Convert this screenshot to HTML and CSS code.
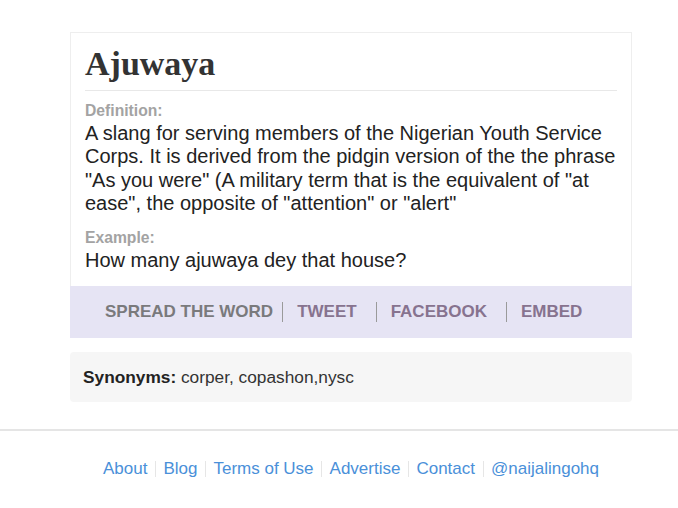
FILE: index.html
```html
<!DOCTYPE html>
<html lang="en">
<head>
<meta charset="utf-8">
<title>Ajuwaya</title>
<link rel="stylesheet" href="styles.css">
</head>
<body>
<div class="container">
  <div class="card">
    <div class="card-body">
      <h1 class="title">Ajuwaya</h1>
      <div class="label label-def">Definition:</div>
      <p class="text">A slang for serving members of the Nigerian Youth Service Corps. It is derived from the pidgin version of the the phrase "As you were" (A military term that is the equivalent of "at ease", the opposite of "attention" or "alert"</p>
      <div class="label label-ex">Example:</div>
      <p class="text">How many ajuwaya dey that house?</p>
    </div>
    <div class="share">
      <span class="share-label">SPREAD THE WORD</span>
      <a class="share-link" href="#">TWEET</a>
      <a class="share-link" href="#">FACEBOOK</a>
      <a class="share-link" href="#">EMBED</a>
    </div>
  </div>
  <div class="synonyms"><b>Synonyms:</b> corper, copashon,nysc</div>
</div>
<footer class="footer">
  <nav class="footer-links">
    <a href="#">About</a><span class="sep"></span><a href="#">Blog</a><span class="sep"></span><a href="#">Terms of Use</a><span class="sep"></span><a href="#">Advertise</a><span class="sep"></span><a href="#">Contact</a><span class="sep"></span><a href="#">@naijalingohq</a>
  </nav>
</footer>
</body>
</html>
```
FILE: styles.css
```css
html, body {
  margin: 0;
  padding: 0;
  background: #fff;
}
body {
  font-family: "Liberation Sans", Arial, sans-serif;
  color: #222;
}
.container {
  width: 562px;
  margin: 0 0 0 70px;
  padding-top: 32px;
}
.card {
  border: 1px solid #eeeeee;
  border-bottom: none;
  background: #fff;
}
.card-body {
  padding: 11px 14px 13.5px 14px;
}
.title {
  margin: 0;
  font-family: "Liberation Serif", "Times New Roman", serif;
  font-weight: bold;
  font-size: 34px;
  line-height: 40px;
  color: #333;
  padding-bottom: 6px;
  border-bottom: 1px solid #e8e8e8;
}
.label {
  font-size: 15.7px;
  font-weight: bold;
  line-height: 18px;
  color: #a3a3a3;
}
.label-def { margin-top: 11px; }
.label-ex { margin-top: 13px; }
.text {
  margin: 2px 0 0 0;
  font-size: 20px;
  line-height: 23.4px;
  color: #222;
}
.share {
  display: flex;
  align-items: center;
  height: 52px;
  margin: 0 -1px;
  padding-left: 35px;
  background: #e6e4f4;
  font-size: 17px;
  font-weight: bold;
}
.share-label {
  color: #7a7a7c;
  margin-right: 9px;
  line-height: 20px;
}
.share-link {
  display: block;
  color: #87738f;
  text-decoration: none;
  line-height: 20px;
  border-left: 1px solid #9a9a9a;
  padding-left: 14px;
  margin-right: 19px;
}
.synonyms {
  margin-top: 14px;
  height: 50px;
  line-height: 50px;
  padding-left: 13px;
  background: #f6f6f6;
  border-radius: 4px;
  font-size: 17.3px;
  color: #333;
}
.synonyms b {
  color: #222;
}
.footer {
  margin-top: 27px;
  border-top: 2px solid #e5e5e5;
}
.footer-links {
  width: 562px;
  margin-left: 70px;
  padding-top: 28px;
  display: flex;
  justify-content: center;
  align-items: center;
  font-size: 17px;
  line-height: 20px;
}
.footer-links a {
  color: #4a90d9;
  text-decoration: none;
}
.sep {
  display: inline-block;
  width: 1px;
  height: 16px;
  background: #e6e6e6;
  margin: 0 7.5px;
}
```
